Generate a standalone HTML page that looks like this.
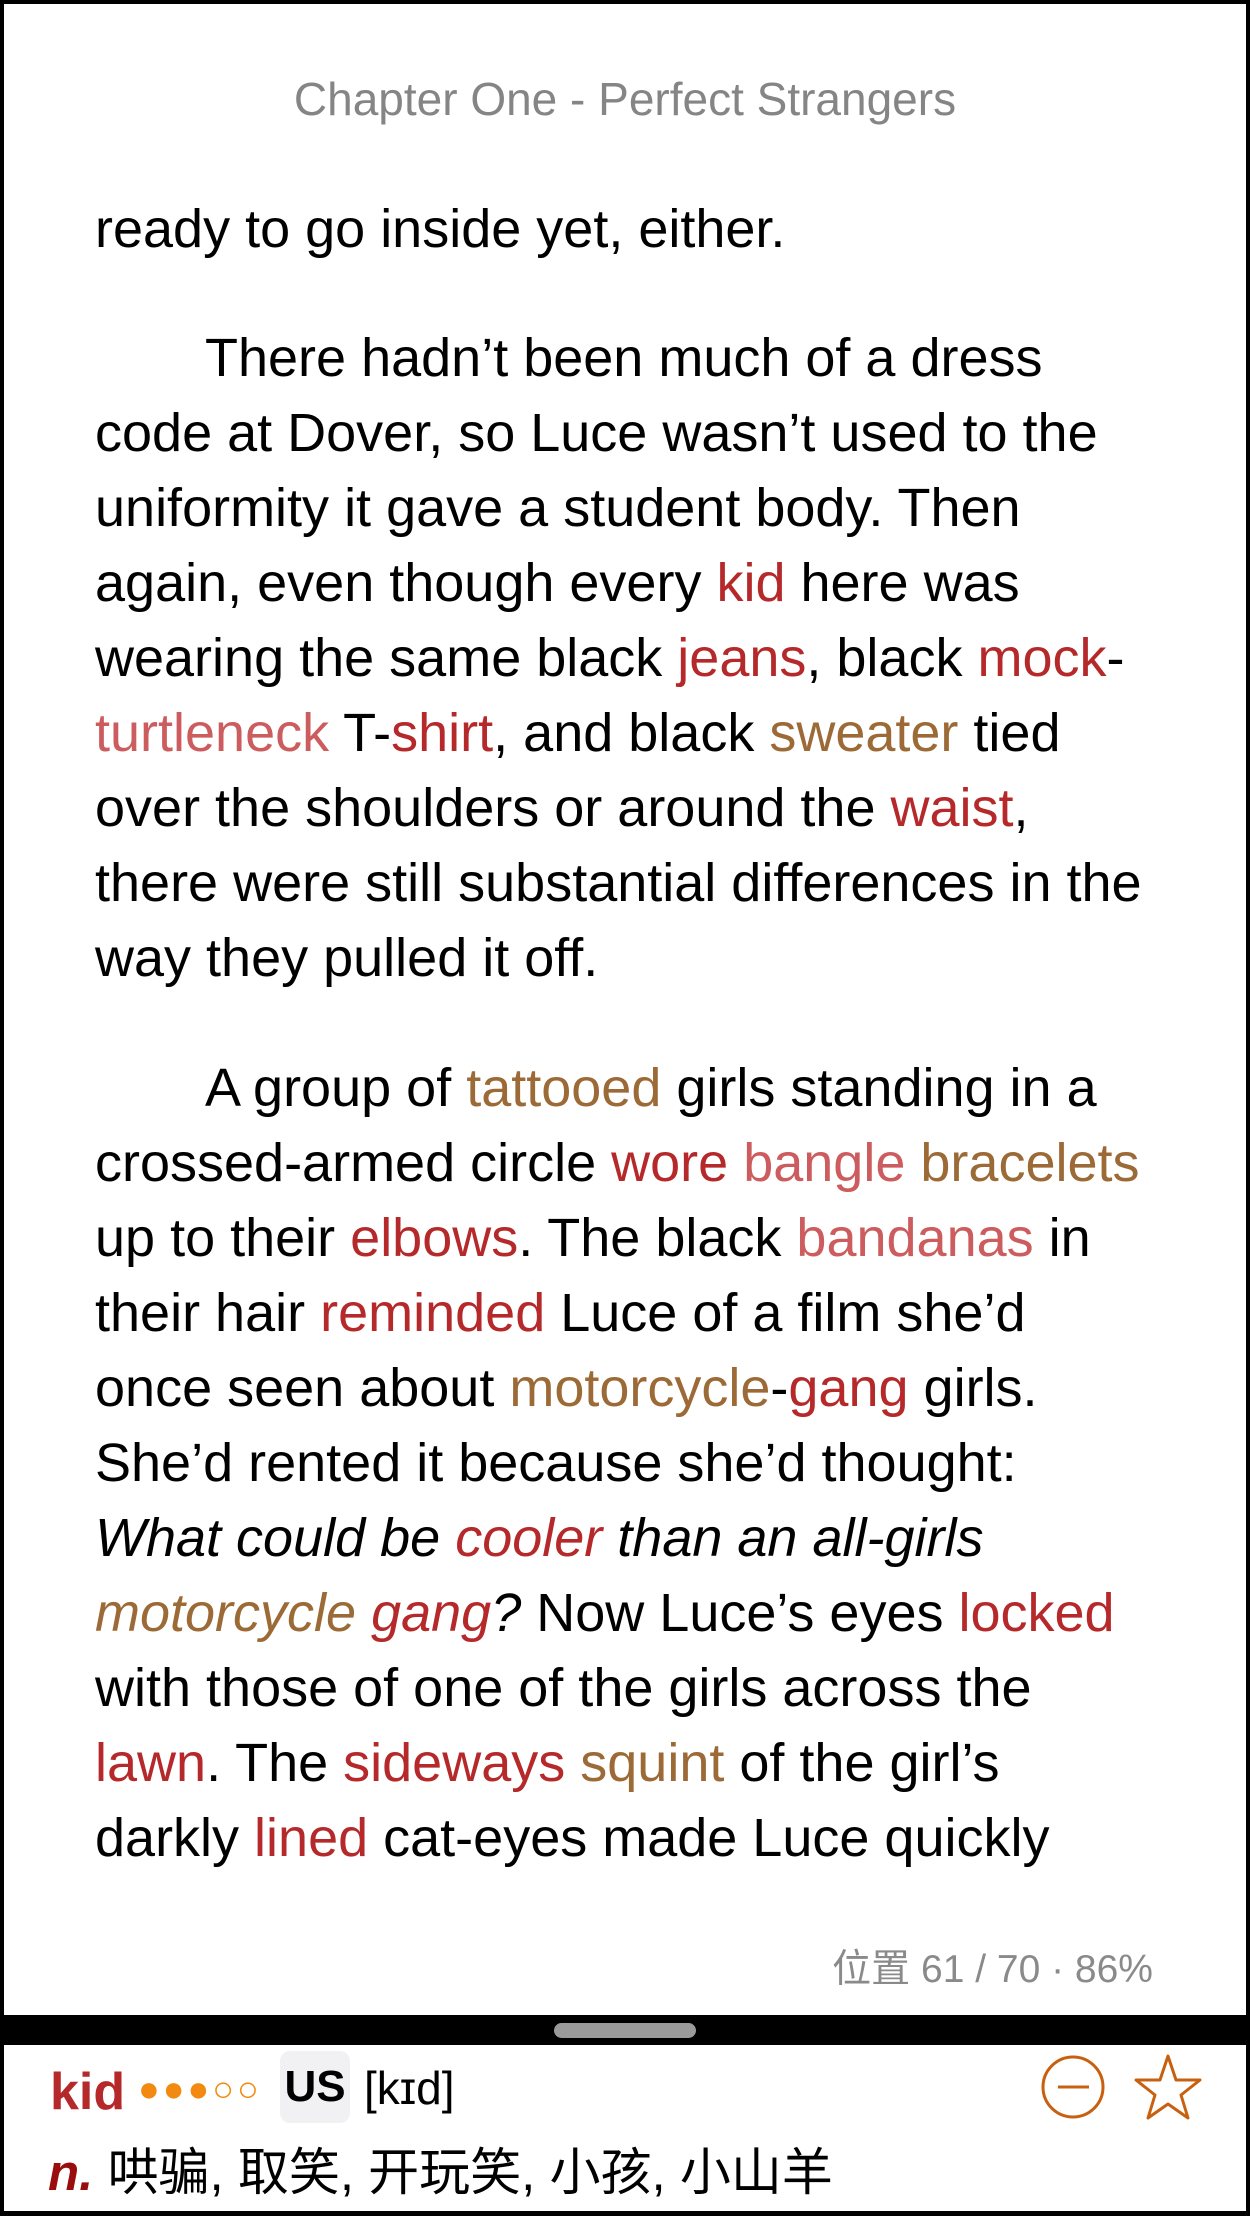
<!DOCTYPE html>
<html><head><meta charset="utf-8"><style>
html,body{margin:0;padding:0;background:#000;}
body{width:1250px;height:2216px;position:relative;overflow:hidden;font-family:"Liberation Sans","Noto Sans CJK SC",sans-serif;}
.page{position:absolute;left:4px;top:4px;width:1242px;height:2011px;background:#fff;}
.panel{position:absolute;left:4px;top:2045px;width:1242px;height:166px;background:#fff;}
.handle{position:absolute;left:554px;top:2023px;width:142px;height:15px;border-radius:8px;background:#9a9a9a;}
.title{position:absolute;left:0;width:1250px;top:71px;text-align:center;font-size:46px;color:#858585;line-height:56px;}
.l{position:absolute;left:95px;height:75px;line-height:75px;font-size:54px;color:#000;white-space:nowrap;}
.ind{left:205px;}
.r{color:#b5292b}.p{color:#cc5c5e}.b{color:#9c6a36}
.st{position:absolute;right:97px;top:1947px;font-size:39px;color:#8a8a8a;line-height:46px;}
</style></head><body>
<div class="page"></div>
<div class="title">Chapter One - Perfect Strangers</div>
<div class="l" style="top:192px">ready to go inside yet, either.</div>
<div class="l ind" style="top:321px">There hadn’t been much of a dress</div>
<div class="l" style="top:396px">code at Dover, so Luce wasn’t used to the</div>
<div class="l" style="top:471px">uniformity it gave a student body. Then</div>
<div class="l" style="top:546px">again, even though every <span class="r">kid</span> here was</div>
<div class="l" style="top:621px">wearing the same black <span class="r">jeans</span>, black <span class="r">mock</span>-</div>
<div class="l" style="top:696px"><span class="p">turtleneck</span> T-<span class="r">shirt</span>, and black <span class="b">sweater</span> tied</div>
<div class="l" style="top:771px">over the shoulders or around the <span class="r">waist</span>,</div>
<div class="l" style="top:846px">there were still substantial differences in the</div>
<div class="l" style="top:921px">way they pulled it off.</div>
<div class="l ind" style="top:1051px">A group of <span class="b">tattooed</span> girls standing in a</div>
<div class="l" style="top:1126px">crossed-armed circle <span class="r">wore</span> <span class="p">bangle</span> <span class="b">bracelets</span></div>
<div class="l" style="top:1201px">up to their <span class="r">elbows</span>. The black <span class="p">bandanas</span> in</div>
<div class="l" style="top:1276px">their hair <span class="r">reminded</span> Luce of a film she’d</div>
<div class="l" style="top:1351px">once seen about <span class="b">motorcycle</span>-<span class="r">gang</span> girls.</div>
<div class="l" style="top:1426px">She’d rented it because she’d thought:</div>
<div class="l" style="top:1501px"><i>What could be <span class="r">cooler</span> than an all-girls</i></div>
<div class="l" style="top:1576px"><i><span class="b">motorcycle</span> <span class="r">gang</span>?</i> Now Luce’s eyes <span class="r">locked</span></div>
<div class="l" style="top:1651px">with those of one of the girls across the</div>
<div class="l" style="top:1726px"><span class="r">lawn</span>. The <span class="r">sideways</span> <span class="b">squint</span> of the girl’s</div>
<div class="l" style="top:1801px">darkly <span class="r">lined</span> cat-eyes made Luce quickly</div>
<div class="st">位置 61 / 70 · 86%</div>
<div class="handle"></div>
<div class="panel"></div>
<div style="position:absolute;left:50px;top:2060px;font-size:52px;font-weight:bold;color:#b5292b;line-height:64px;">kid</div>
<div style="position:absolute;left:138px;top:2064px;font-size:36px;color:#f28a12;line-height:50px;letter-spacing:3px;">●●●○○</div>
<div style="position:absolute;left:280px;top:2051px;width:70px;height:72px;background:#f1f1f4;border-radius:10px;font-size:44px;font-weight:bold;text-align:center;line-height:72px;">US</div>
<div style="position:absolute;left:364px;top:2060px;font-size:46px;line-height:56px;">[kɪd]</div>
<svg style="position:absolute;left:1030px;top:2050px" width="190" height="80" viewBox="1030 2050 190 80">
<circle cx="1073" cy="2087" r="30" fill="none" stroke="#c8600f" stroke-width="3"/>
<line x1="1058" y1="2087" x2="1089" y2="2087" stroke="#c8600f" stroke-width="3"/>
<polygon points="1168,2056 1176,2080 1200,2080 1181,2095 1188,2118 1168,2104 1148,2118 1155,2095 1136,2080 1160,2080" fill="none" stroke="#c8600f" stroke-width="3" stroke-linejoin="round"/>
</svg>
<div style="position:absolute;left:48px;top:2142px;font-size:51px;line-height:62px;white-space:nowrap;"><b><i style="color:#9a0d0d">n.</i></b> 哄骗, 取笑, 开玩笑, 小孩, 小山羊</div>
</body></html>
